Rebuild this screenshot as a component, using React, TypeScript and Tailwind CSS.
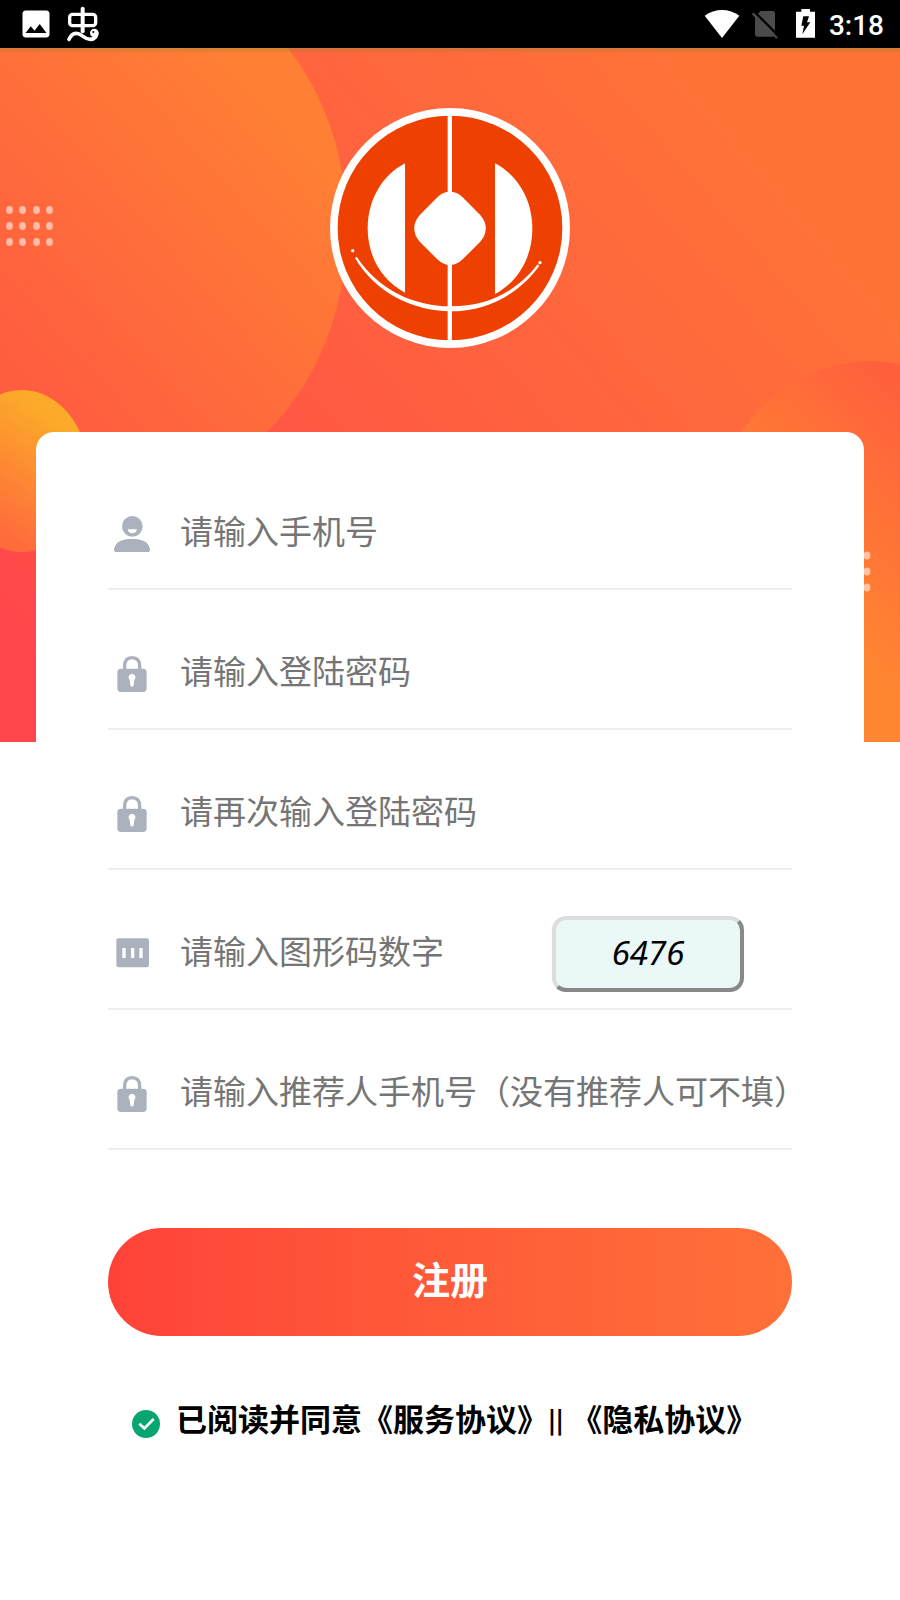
import type { ReactNode } from "react";
import { MdImage } from "react-icons/md";

function StatusBar() {
  return (
    <div className="flex h-12 items-center justify-between bg-black pr-4 pl-[18px] text-white">
      <div className="flex items-center gap-2">
        <MdImage className="size-9" />
        <svg viewBox="189 9 126 126" className="size-[42px]" fill="none" stroke="white" strokeLinecap="round">
          <rect x="212" y="43" width="78" height="34" rx="9" strokeWidth="10" />
          <path d="M251 26V94" strokeWidth="12" />
          <path d="M210 118C217 102 227 98 238 101C252 105 256 118 274 118C288 118 294 108 293 99" strokeWidth="11" />
          <circle cx="286" cy="99" r="13" fill="white" stroke="none" />
          <circle cx="283" cy="96" r="3" fill="black" stroke="none" />
        </svg>
      </div>

      <div className="flex items-center">
        <svg viewBox="183 9 126 126" className="size-[42px]" fill="white">
          <path d="M194 47C225 24 267 24 298 47L246 114Z" />
        </svg>
        <svg viewBox="309 9 126 126" className="size-[42px]">
          <path d="M362 33H398Q405 33 405 40V103Q405 110 398 110H352Q345 110 345 103V50Z" fill="#4b4b4b" />
          <path d="M342 34L418 110" stroke="black" strokeWidth="7" />
          <path d="M338 40L411 114" stroke="#4b4b4b" strokeWidth="7" />
        </svg>
        <svg viewBox="435 9 126 126" className="size-[42px]">
          <path d="M484 27H510V35H525V113H468V35H484Z" fill="white" />
          <path d="M490 49H507L501 67H511L487 103L492 77H484Z" fill="black" />
        </svg>
        <span className="pt-1 pl-0.5 font-[Roboto,sans-serif] text-[28px] leading-8 font-medium">3:18</span>
      </div>
    </div>
  );
}

const dotRows = [0, 16, 32];
const dotCols = [0, 13, 27, 40];

function Backdrop() {
  return (
    <svg
      viewBox="0 48 900 694"
      preserveAspectRatio="none"
      className="absolute inset-x-0 top-0 h-[694px] w-full"
      aria-hidden="true"
    >
      <defs>
        <linearGradient id="base" gradientUnits="userSpaceOnUse" x1="20" y1="650" x2="700" y2="60">
          <stop offset="0" stopColor="#ff474b" />
          <stop offset="1" stopColor="#ff7337" />
        </linearGradient>
        <linearGradient id="big" gradientUnits="userSpaceOnUse" x1="20" y1="370" x2="300" y2="120">
          <stop offset="0" stopColor="#ff5d40" />
          <stop offset="1" stopColor="#ff8034" />
        </linearGradient>
        <linearGradient id="small" gradientUnits="userSpaceOnUse" x1="0" y1="530" x2="70" y2="430">
          <stop offset="0" stopColor="#ff6c3c" />
          <stop offset="1" stopColor="#fcaa29" />
        </linearGradient>
        <linearGradient id="right" gradientUnits="userSpaceOnUse" x1="900" y1="380" x2="740" y2="540">
          <stop offset="0" stopColor="#ff5f3d" />
          <stop offset="1" stopColor="#ff8631" />
        </linearGradient>
      </defs>
      <rect y="48" width="900" height="694" fill="url(#base)" />
      <ellipse cx="132" cy="228" rx="215" ry="262" fill="url(#big)" />
      <ellipse cx="22" cy="471" rx="66" ry="81" fill="url(#small)" />
      <ellipse cx="870" cy="563" rx="169" ry="202" fill="url(#right)" />
      <g fill="white" fillOpacity="0.56">
        {dotRows.map((y) =>
          dotCols.map((x) => <ellipse key={`${x}-${y}`} cx={9.5 + x} cy={210 + y} rx="3.4" ry="4" />),
        )}
        {dotRows.map((y) => (
          <ellipse key={y} cx="867" cy={555.5 + y} rx="3.4" ry="4" />
        ))}
      </g>
      <rect y="48" width="900" height="4" fill="#7d8a2c" fillOpacity="0.24" />
    </svg>
  );
}

function Logo() {
  return (
    <svg viewBox="60 54 720 720" className="size-60" role="img" aria-label="logo">
      <circle cx="420" cy="414" r="360" fill="white" />
      <circle cx="420" cy="414" r="337" fill="#ee4000" />
      <g fill="white">
        <path d="M285 220V608C216 572 173 500 173 415C173 330 216 256 285 220Z" />
        <path d="M555 220V612C624 576 667 502 667 416C667 330 624 256 555 220Z" />
        <path d="M413 60H426V768H413Z" />
        <path d="M382 322C405 300 435 300 458 322L510 374C533 398 533 432 510 456L458 508C435 531 405 531 382 508L330 456C307 432 307 398 330 374Z" />
        <path d="M140 500C205 598 310 648 420 649C530 650 620 605 683 523L688 527C624 615 530 664 420 664C310 662 198 610 135 504Z" />
        <circle cx="128" cy="482" r="5" />
        <circle cx="690" cy="518" r="5" />
      </g>
    </svg>
  );
}

function UserIcon() {
  return (
    <svg viewBox="0 0 108 108" className="size-9 shrink-0" fill="#abb2bd">
      <circle cx="55" cy="31" r="31" />
      <path d="M0 103C0 84 18 69 45 69H64C90 69 108 84 108 103Q108 108 103 108H5Q0 108 0 103Z" />
      <path d="M41 40H69Q67 52 55 52Q43 52 41 40Z" fill="white" />
    </svg>
  );
}

function LockIcon() {
  return (
    <svg viewBox="0 0 108 108" className="size-9 shrink-0" fill="#abb2bd">
      <path d="M32 42V30Q32 5 54 5Q77 5 77 30V42" fill="none" stroke="#abb2bd" strokeWidth="10" />
      <rect x="10" y="38" width="88" height="70" rx="11" />
      <path d="M54 53A11 11 0 0 1 61 72L59 88Q58 92 54 92Q50 92 49 88L47 72A11 11 0 0 1 54 53Z" fill="white" />
    </svg>
  );
}

function CodeIcon() {
  return (
    <svg viewBox="0 0 108 108" className="size-9 shrink-0" fill="#abb2bd">
      <rect x="7" y="7" width="98" height="87" rx="7" />
      <path d="M25 36H35V66H25ZM51 36H61V66H51ZM76 36H86V66H76Z" fill="white" />
    </svg>
  );
}

function Field({
  icon,
  type,
  placeholder,
  children,
}: {
  icon: ReactNode;
  type: string;
  placeholder: string;
  children?: ReactNode;
}) {
  return (
    <div className="flex h-[112px] items-center border-b-2 border-[#eeeeee] pt-0.5 pl-1.5">
      <label className="flex min-w-0 flex-1 items-center gap-[30px]">
        {icon}
        <input
          type={type}
          placeholder={placeholder}
          aria-label={placeholder}
          className="h-16 min-w-0 flex-1 bg-transparent pb-1 text-[33px] outline-none placeholder:text-[#757575]"
        />
      </label>
      {children}
    </div>
  );
}

export default function App() {
  return (
    <div className="min-h-screen bg-white font-[Roboto,'Noto_Sans_CJK_SC',sans-serif] text-black">
      <StatusBar />

      <main className="relative">
        <Backdrop />

        <div className="relative flex flex-col px-9 pt-[60px]">
          <div className="mb-[84px] flex justify-center">
            <Logo />
          </div>

          <form className="rounded-t-[18px] bg-white px-[72px] pt-[46px] pb-20" onSubmit={(e) => e.preventDefault()}>
            <div className="flex flex-col gap-7">
              <Field icon={<UserIcon />} type="tel" placeholder="请输入手机号" />
              <Field icon={<LockIcon />} type="password" placeholder="请输入登陆密码" />
              <Field icon={<LockIcon />} type="password" placeholder="请再次输入登陆密码" />
              <Field icon={<CodeIcon />} type="text" placeholder="请输入图形码数字">
                <button
                  type="button"
                  className="mr-12 h-[76px] w-48 rounded-[14px] border-4 border-t-[#dddddd] border-r-[#888888] border-b-[#888888] border-l-[#dddddd] bg-[#eaf8f8] pb-0.5 font-['Noto_Sans',sans-serif] text-[33px] italic"
                >
                  6476
                </button>
              </Field>
              <Field icon={<LockIcon />} type="tel" placeholder="请输入推荐人手机号（没有推荐人可不填）" />
            </div>

            <button
              type="submit"
              className="mt-[78px] h-[108px] w-full rounded-full bg-linear-to-r from-[#ff4239] to-[#ff7038] pb-0.5 text-[38px] font-bold text-white"
            >
              注册
            </button>

            <div className="mt-[62px] flex items-center gap-4 pl-6">
              <div className="mt-1.5 grid size-7 shrink-0">
                <input
                  type="checkbox"
                  id="agree"
                  defaultChecked
                  className="col-start-1 row-start-1 size-7 appearance-none rounded-full bg-[#07a671]"
                />
                <svg
                  viewBox="0 0 84 84"
                  className="pointer-events-none col-start-1 row-start-1 size-7"
                  fill="none"
                  stroke="white"
                  strokeWidth="8"
                >
                  <path d="M22 41L37 55L65 27" />
                </svg>
              </div>
              <p className="text-[31px] leading-[46px] font-bold">
                <label htmlFor="agree">已阅读并同意</label>
                <a href="#service">《服务协议》</a>
                || <a href="#privacy">《隐私协议》</a>
              </p>
            </div>
          </form>
        </div>
      </main>
    </div>
  );
}
